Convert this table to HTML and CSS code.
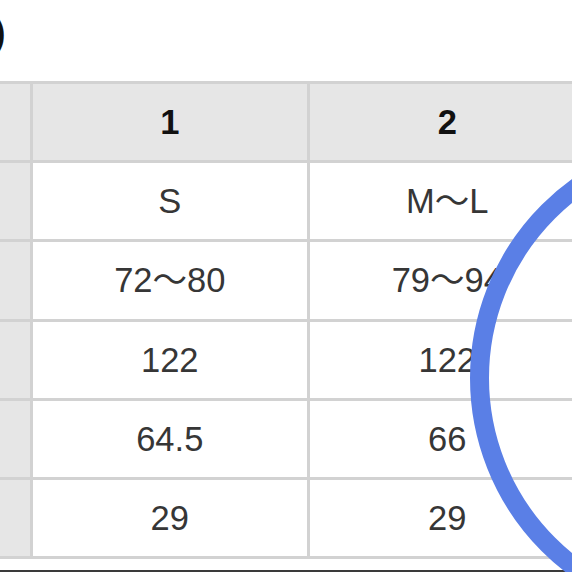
FILE: index.html
```html
<!DOCTYPE html>
<html lang="ja">
<head>
<meta charset="utf-8">
<title>サイズ表</title>
<link rel="stylesheet" href="styles.css">
</head>
<body>
<div class="page">
  <div class="title"><span class="paren">)</span></div>
  <div class="size-table">
    <div class="cell side head"></div>
    <div class="cell head">1</div>
    <div class="cell head">2</div>

    <div class="cell side"></div>
    <div class="cell">S</div>
    <div class="cell">M〜L</div>

    <div class="cell side"></div>
    <div class="cell">72〜80</div>
    <div class="cell">79〜94</div>

    <div class="cell side"></div>
    <div class="cell">122</div>
    <div class="cell">122</div>

    <div class="cell side"></div>
    <div class="cell">64.5</div>
    <div class="cell">66</div>

    <div class="cell side"></div>
    <div class="cell">29</div>
    <div class="cell">29</div>
  </div>
  <div class="bottom-bar"></div>
  <svg class="ring" width="572" height="572" viewBox="0 0 572 572" aria-hidden="true">
    <circle cx="715" cy="378" r="235.5" fill="none" stroke="#5a7fe6" stroke-width="19"/>
  </svg>
</div>
</body>
</html>
```

FILE: styles.css
```css
html, body {
  margin: 0;
  padding: 0;
  background: #ffffff;
  overflow: hidden;
}

.page {
  position: relative;
  width: 572px;
  height: 572px;
  overflow: hidden;
  font-family: "Liberation Sans", "Noto Sans CJK JP", Arial, sans-serif;
}

.title {
  height: 81px;
  line-height: 65px;
  font-size: 36px;
  font-weight: bold;
  color: #111111;
  overflow: hidden;
}

.paren {
  display: inline-block;
  margin-left: -6.5px;
}

.size-table {
  display: grid;
  grid-template-columns: 60px 274.5px 274.5px;
  grid-auto-rows: 76.2px;
  gap: 3px;
  padding: 3px 0;
  margin-left: -30.5px;
  width: 615px;
  background: #d2d2d2;
}

.cell {
  display: flex;
  align-items: center;
  justify-content: center;
  background: #ffffff;
  color: #363636;
  font-size: 34.5px;
  line-height: 36px;
}

.cell.head {
  background: #e6e6e6;
  color: #111111;
  font-weight: bold;
}

.cell.side {
  background: #e6e6e6;
}

.bottom-bar {
  margin-top: 10.8px;
  height: 2px;
  background: #3a3a3a;
}

.ring {
  position: absolute;
  left: 0;
  top: 0;
}
```
